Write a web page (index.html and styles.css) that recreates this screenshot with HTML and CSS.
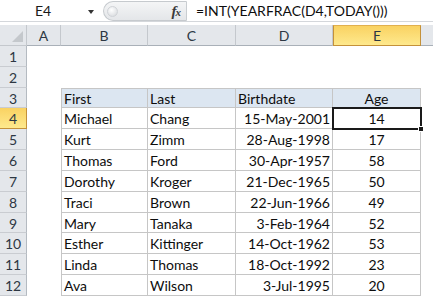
FILE: index.html
```html
<!DOCTYPE html>
<html>
<head>
<meta charset="utf-8">
<link rel="stylesheet" href="styles.css">
</head>
<body>
<div class="fbar">
  <div class="namebox"><span class="nb-text">E4</span><span class="nb-arrow"></span></div>
  <div class="pill"><span class="knob"></span><span class="fx">f<span class="fx-x">x</span></span></div>
  <div class="formula">=INT(YEARFRAC(D4,TODAY()))</div>
</div>
<div class="sheet">
  <div class="corner"><span class="tri"></span></div>
  <div class="ch">A</div>
  <div class="ch">B</div>
  <div class="ch">C</div>
  <div class="ch">D</div>
  <div class="ch ch-sel">E</div>
  <div class="ch ch-f"></div>

  <div class="rh">1</div><div class="c"></div><div class="c"></div><div class="c"></div><div class="c"></div><div class="c"></div><div class="c"></div>
  <div class="rh">2</div><div class="c"></div><div class="c"></div><div class="c"></div><div class="c"></div><div class="c"></div><div class="c"></div>

  <div class="rh">3</div><div class="c"></div>
  <div class="t th first">First</div><div class="t th">Last</div><div class="t th">Birthdate</div><div class="t th ctr">Age</div><div class="c"></div>

  <div class="rh rh-sel">4</div><div class="c"></div>
  <div class="t first">Michael</div><div class="t">Chang</div><div class="t num">15-May-2001</div><div class="t ctr sel">14<span class="handle"></span></div><div class="c"></div>

  <div class="rh">5</div><div class="c"></div>
  <div class="t first">Kurt</div><div class="t">Zimm</div><div class="t num">28-Aug-1998</div><div class="t ctr">17</div><div class="c"></div>

  <div class="rh">6</div><div class="c"></div>
  <div class="t first">Thomas</div><div class="t">Ford</div><div class="t num">30-Apr-1957</div><div class="t ctr">58</div><div class="c"></div>

  <div class="rh">7</div><div class="c"></div>
  <div class="t first">Dorothy</div><div class="t">Kroger</div><div class="t num">21-Dec-1965</div><div class="t ctr">50</div><div class="c"></div>

  <div class="rh">8</div><div class="c"></div>
  <div class="t first">Traci</div><div class="t">Brown</div><div class="t num">22-Jun-1966</div><div class="t ctr">49</div><div class="c"></div>

  <div class="rh">9</div><div class="c"></div>
  <div class="t first">Mary</div><div class="t">Tanaka</div><div class="t num">3-Feb-1964</div><div class="t ctr">52</div><div class="c"></div>

  <div class="rh">10</div><div class="c"></div>
  <div class="t first">Esther</div><div class="t">Kittinger</div><div class="t num">14-Oct-1962</div><div class="t ctr">53</div><div class="c"></div>

  <div class="rh">11</div><div class="c"></div>
  <div class="t first">Linda</div><div class="t">Thomas</div><div class="t num">18-Oct-1992</div><div class="t ctr">23</div><div class="c"></div>

  <div class="rh">12</div><div class="c"></div>
  <div class="t first">Ava</div><div class="t">Wilson</div><div class="t num">3-Jul-1995</div><div class="t ctr">20</div><div class="c"></div>
</div>
</body>
</html>
```
FILE: styles.css
```css
* { box-sizing: border-box; }
html, body { margin: 0; padding: 0; background: #fff; overflow: hidden; }
body {
  width: 433px;
  height: 296px;
  font-family: Lato, "Liberation Sans", sans-serif;
  font-size: 14px;
  color: #0d0d0d;
}

.fbar {
  display: flex;
  height: 22px;
  border-bottom: 1px solid #d4d7db;
  margin-bottom: 3px;
}
.namebox {
  width: 103px;
  display: flex;
  align-items: center;
  position: relative;
  padding-left: 35px;
}
.nb-text { font-size: 14px; color: #1a1a1a; }
.nb-arrow {
  position: absolute;
  left: 88px;
  top: 10px;
  width: 0; height: 0;
  border-left: 3.5px solid transparent;
  border-right: 3.5px solid transparent;
  border-top: 4px solid #333;
}
.pill {
  width: 84px;
  height: 20px;
  margin-top: 1px;
  border: 1px solid #c6cace;
  border-right: 1px solid #c9cdd1;
  border-radius: 11px 0 0 11px;
  background: linear-gradient(#f4f5f6, #e4e6e9);
  display: flex;
  align-items: center;
  justify-content: space-between;
  padding-left: 3px;
  padding-right: 6px;
}
.knob {
  width: 11px; height: 11px;
  border-radius: 50%;
  background: radial-gradient(circle at 40% 35%, #ffffff, #d3d6da);
  border: 1px solid #d0d3d7;
}
.fx {
  font-family: "Liberation Serif", serif;
  font-style: italic;
  font-weight: bold;
  font-size: 15px;
  color: #3a3a3a;
  letter-spacing: -1px;
}
.fx-x { font-size: 11px; }
.formula {
  flex: 1;
  padding-left: 9px;
  display: flex;
  align-items: center;
  font-size: 14px;
  color: #0d0d0d;
}

.sheet {
  display: grid;
  grid-template-columns: 27px 34px 87px 88px 97px 88px 12px;
  grid-template-rows: 21px repeat(12, 20.84px);
}
.corner {
  background: #e4e7eb;
  border-right: 1px solid #c4c8cd;
  border-bottom: 1px solid #c4c8cd;
  position: relative;
}
.tri {
  position: absolute;
  right: 3px;
  bottom: 3px;
  width: 0; height: 0;
  border-left: 11px solid transparent;
  border-bottom: 11px solid #c4c8cc;
}
.ch {
  background: #e4e7eb;
  border-right: 1px solid #c4c8cd;
  border-bottom: 1px solid #a9b0b8;
  display: flex;
  align-items: center;
  justify-content: center;
  color: #2d3743;
  font-size: 14px;
}
.ch-f { border-right: none; }
.ch-sel {
  background: linear-gradient(#f9d262, #fee98d);
  border: 1px solid #c4913a;
  border-top-color: #e0b050;
}
.rh {
  background: #e4e7eb;
  border-right: 1px solid #b4bac1;
  border-bottom: 1px solid #c9ccd1;
  display: flex;
  align-items: center;
  justify-content: center;
  color: #2d3743;
  font-size: 14px;
  padding-top: 1px;
}
.rh-sel {
  background: linear-gradient(#f9d262, #fee98d);
  border-right: 1px solid #c4913a;
  border-bottom: 1px solid #c4913a;
}
.c { background: #fff; }
.t {
  background: #fff;
  border-right: 1px solid #c6c6c6;
  border-bottom: 1px solid #c6c6c6;
  display: flex;
  align-items: center;
  padding: 1px 2px 0 2px;
  white-space: nowrap;
  position: relative;
}
.first { border-left: 1px solid #c6c6c6; }
.th { background: #dce6f1; border-top: 1px solid #c6c6c6; }
.num { justify-content: flex-end; padding-right: 2px; }
.ctr { justify-content: center; }
.sel {
  outline: 2px solid #1a1a1a;
  outline-offset: -1px;
  z-index: 2;
}
.handle {
  position: absolute;
  right: -4px;
  bottom: -4px;
  width: 6px;
  height: 6px;
  background: #1a1a1a;
  border: 1px solid #fff;
}
```
